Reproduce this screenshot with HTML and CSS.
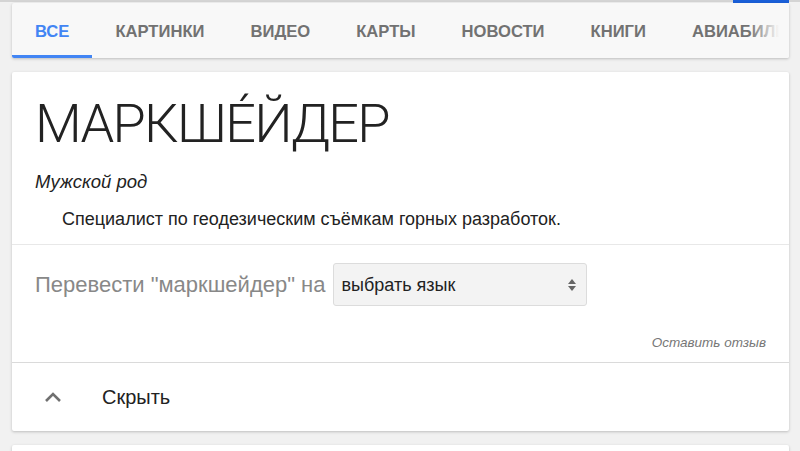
FILE: index.html
```html
<!DOCTYPE html>
<html lang="ru">
  <head>
    <meta charset="UTF-8" />
    <link rel="stylesheet" href="styles.css">
    <title>маркшейдер</title>
  </head>
  <body>
  <div id="topline"><span class="topmark"></span></div>

  <div id="tabs" class="card">
    <div class="tab active">ВСЕ</div>
    <div class="tab">КАРТИНКИ</div>
    <div class="tab">ВИДЕО</div>
    <div class="tab">КАРТЫ</div>
    <div class="tab">НОВОСТИ</div>
    <div class="tab">КНИГИ</div>
    <div class="tab">АВИАБИЛЕТЫ</div>
    <div class="fade"></div>
  </div>

  <div id="dict" class="card">
    <div class="entry">
      <h1 class="word">МАРКШЕ́ЙДЕР</h1>
      <div class="pos">Мужской род</div>
      <div class="meaning">Специалист по геодезическим съёмкам горных разработок.</div>
    </div>
    <div class="translate">
      <div class="transline">
        <span class="label">Перевести "маркшейдер" на</span>
        <div class="select">
          <span>выбрать язык</span>
          <svg class="updown" width="10" height="16" viewBox="0 0 10 16">
            <path d="M1 7 L5 2 L9 7 Z" fill="#666"/>
            <path d="M1 9 L5 14 L9 9 Z" fill="#666"/>
          </svg>
        </div>
      </div>
      <div class="feedback">Оставить отзыв</div>
    </div>
    <div class="hide">
      <svg class="chev" width="18" height="12" viewBox="0 0 18 12">
        <path d="M2 10 L9 3 L16 10" fill="none" stroke="#707070" stroke-width="2.6"/>
      </svg>
      <span>Скрыть</span>
    </div>
  </div>

  <div id="next" class="card"></div>
</body>
</html>
```

FILE: styles.css
```css
*{
  box-sizing: border-box;
}
html, body {
  margin: 0;
  padding: 0;
}
body {
  background-color: #f1f1f1;
  font-family: "Liberation Sans", Arial, sans-serif;
  color: #222;
  overflow: hidden;
  height: 451px;
}

#topline {
  height: 3px;
  border-top: 2px solid #d4d4d4;
  position: relative;
}
.topmark {
  position: absolute;
  top: -2px;
  left: 733px;
  width: 56px;
  height: 3px;
  background-color: #1a5fd8;
}

.card {
  margin: 0 11px 0 12px;
  background-color: white;
  border-radius: 2px;
  box-shadow: 0 1px 3px rgba(0,0,0,0.22);
}

/*====== tabs ======*/
#tabs {
  height: 55px;
  background-color: #f8f8f8;
  display: flex;
  overflow: hidden;
  position: relative;
}
.tab {
  padding: 0 23px;
  height: 55px;
  line-height: 58px;
  font-size: 16.6px;
  font-weight: bold;
  color: #727272;
  white-space: nowrap;
}
.tab.active {
  color: #4285f4;
  border-bottom: 3px solid #4285f4;
}
.fade {
  position: absolute;
  top: 0;
  right: 0;
  bottom: 0;
  width: 40px;
  background: linear-gradient(to right, rgba(248,248,248,0), #f8f8f8 75%);
}

/*====== dictionary card ======*/
#dict {
  margin-top: 14px;
}
.entry {
  padding: 20px 23px 14px;
  border-bottom: 1px solid #e8e8e8;
}
.word {
  margin: 0;
  font-family: Roboto, sans-serif;
  font-weight: 300;
  font-size: 54px;
  line-height: 64px;
  color: #222;
  letter-spacing: -1.7px;
}
.pos {
  margin-top: 15px;
  font-style: italic;
  font-size: 18.5px;
  line-height: 22px;
}
.meaning {
  margin-top: 15px;
  padding-left: 27px;
  font-size: 18px;
  line-height: 22px;
}

.translate {
  padding: 18px 23px 11px;
  border-bottom: 1px solid #dadada;
}
.transline {
  display: flex;
  align-items: center;
  gap: 7px;
}
.label {
  color: #888;
  font-size: 22px;
}
.select {
  width: 254px;
  height: 43px;
  background-color: #f3f3f3;
  border: 1px solid #dcdcdc;
  border-radius: 3px;
  display: flex;
  align-items: center;
  justify-content: space-between;
  padding: 2px 9px 0 8px;
  font-size: 18px;
  color: #222;
}
.updown {
  margin-top: -2px;
}
.feedback {
  margin-top: 29px;
  text-align: right;
  font-style: italic;
  font-size: 13.5px;
  line-height: 16px;
  color: #777;
}

.hide {
  height: 68px;
  display: flex;
  align-items: center;
  padding-left: 32px;
  font-size: 20px;
  color: #222;
}
.chev {
  margin-right: 40px;
}

#next {
  margin-top: 14px;
  height: 40px;
}
```
